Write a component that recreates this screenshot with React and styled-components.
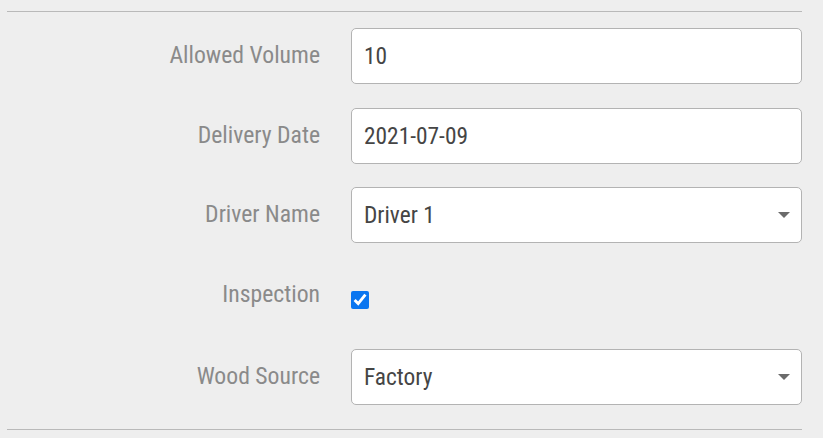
import React from 'react';
import styled, { createGlobalStyle } from 'styled-components';

const GlobalStyle = createGlobalStyle`
  html, body {
    margin: 0;
    padding: 0;
    background: #eeeeee;
    font-family: Roboto, "Liberation Sans", sans-serif;
  }
`;

const FormSection = styled.section`
  width: 795px;
  margin-left: 7px;
  padding-top: 11px;
`;

const Rule = styled.hr`
  margin: 0;
  border: none;
  border-top: 1px solid #b9b9b9;
`;

const Fields = styled.div`
  display: flex;
  flex-direction: column;
  gap: 23.7px;
  padding: 16px 0 24px;
`;

const Row = styled.div`
  display: grid;
  grid-template-columns: 344px 1fr;
  align-items: start;
  min-height: ${(p) => p.$height || 56}px;
`;

const Label = styled.label`
  text-align: right;
  padding: 15px 31px 0 0;
  font-size: 23.7px;
  font-stretch: condensed;
  line-height: 25px;
  color: #8a8a8a;
`;

const Field = styled.div`
  position: relative;
  height: 56px;
  box-sizing: border-box;
  border: 1px solid #b3b3b3;
  border-radius: 5px;
  background: #fff;
  display: flex;
  align-items: center;
  padding: 0 12px;
  font-size: 23.4px;
  font-stretch: condensed;
  color: #454545;
`;

const Caret = styled.span`
  position: absolute;
  right: 11px;
  top: 50%;
  margin-top: -3px;
  width: 0;
  height: 0;
  border-left: 6px solid transparent;
  border-right: 6px solid transparent;
  border-top: 6px solid #6b6b6b;
`;

const Check = styled.input`
  margin: 24px 0 0 0;
  width: 18px;
  height: 18px;
  accent-color: #0b76f0;
`;

const fields = [
  { label: 'Allowed Volume', value: '10' },
  { label: 'Delivery Date', value: '2021-07-09' },
  { label: 'Driver Name', value: 'Driver 1', select: true },
];

export default function App() {
  return (
    <>
      <GlobalStyle />
      <FormSection>
        <Rule />
        <Fields>
          {fields.map((f) => (
            <Row key={f.label}>
              <Label>{f.label}</Label>
              <Field>
                {f.value}
                {f.select && <Caret />}
              </Field>
            </Row>
          ))}
          <Row $height={58}>
            <Label>Inspection</Label>
            <div>
              <Check type="checkbox" defaultChecked readOnly />
            </div>
          </Row>
          <Row>
            <Label>Wood Source</Label>
            <Field>
              Factory
              <Caret />
            </Field>
          </Row>
        </Fields>
        <Rule />
      </FormSection>
    </>
  );
}
